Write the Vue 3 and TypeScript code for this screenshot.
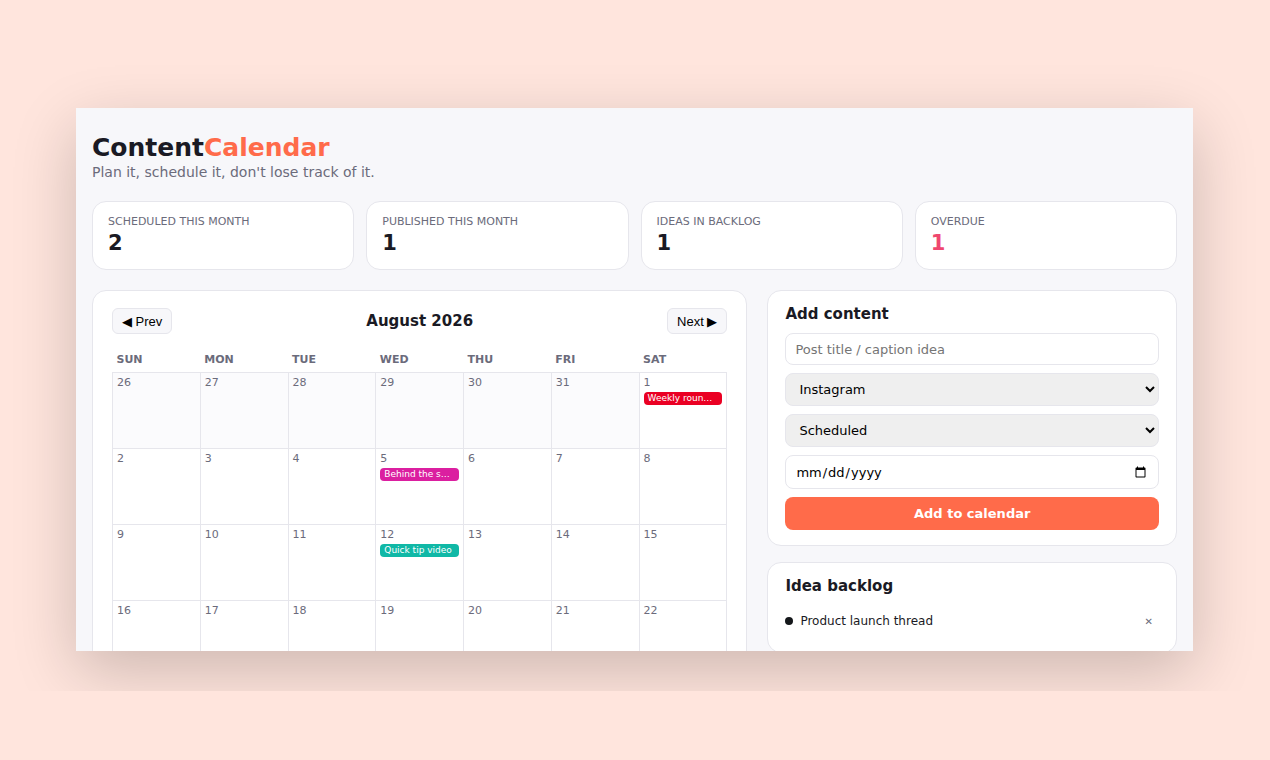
<script setup lang="ts">
import { computed, ref } from 'vue'

type Status = 'Scheduled' | 'Published' | 'Idea'

interface Post {
  id: number
  title: string
  platform: string
  status: Status
  date: string
}

const platforms = ['Instagram', 'TikTok', 'YouTube', 'X']
const statuses: Status[] = ['Scheduled', 'Published', 'Idea']
const weekdays = ['Sun', 'Mon', 'Tue', 'Wed', 'Thu', 'Fri', 'Sat']

const posts = ref<Post[]>([
  { id: 1, title: 'Weekly roundup', platform: 'YouTube', status: 'Published', date: '2026-08-01' },
  { id: 2, title: 'Behind the scenes', platform: 'Instagram', status: 'Scheduled', date: '2026-08-05' },
  { id: 3, title: 'Quick tip video', platform: 'TikTok', status: 'Scheduled', date: '2026-08-12' },
  { id: 4, title: 'Product launch thread', platform: 'X', status: 'Idea', date: '' },
])

const year = ref(2026)
const month = ref(7)
const today = '2026-08-06'

function isoDay(d: Date): string {
  const m = String(d.getMonth() + 1).padStart(2, '0')
  const day = String(d.getDate()).padStart(2, '0')
  return `${d.getFullYear()}-${m}-${day}`
}

const monthTitle = computed(() =>
  new Date(year.value, month.value, 1).toLocaleDateString('en-US', { month: 'long', year: 'numeric' }),
)

const weeks = computed(() => {
  const offset = new Date(year.value, month.value, 1).getDay()
  const length = new Date(year.value, month.value + 1, 0).getDate()
  const rows = Math.ceil((offset + length) / 7)
  return Array.from({ length: rows }, (_, r) =>
    Array.from({ length: 7 }, (_, c) => {
      const d = new Date(year.value, month.value, r * 7 + c - offset + 1)
      const key = isoDay(d)
      return {
        key,
        day: d.getDate(),
        outside: d.getMonth() !== month.value,
        posts: posts.value.filter((p) => p.status !== 'Idea' && p.date === key),
      }
    }),
  )
})

const ideas = computed(() => posts.value.filter((p) => p.status === 'Idea'))

const stats = computed(() => {
  const prefix = isoDay(new Date(year.value, month.value, 1)).slice(0, 7)
  const inMonth = posts.value.filter((p) => p.date.startsWith(prefix))
  return [
    { label: 'Scheduled this month', value: inMonth.filter((p) => p.status === 'Scheduled').length, alert: false },
    { label: 'Published this month', value: inMonth.filter((p) => p.status === 'Published').length, alert: false },
    { label: 'Ideas in backlog', value: ideas.value.length, alert: false },
    { label: 'Overdue', value: posts.value.filter((p) => p.status === 'Scheduled' && p.date < today).length, alert: true },
  ]
})

function shiftMonth(step: number) {
  const d = new Date(year.value, month.value + step, 1)
  year.value = d.getFullYear()
  month.value = d.getMonth()
}

const title = ref('')
const platform = ref('Instagram')
const status = ref<Status>('Scheduled')
const date = ref('')

function addPost() {
  if (!title.value.trim()) return
  posts.value.push({
    id: Date.now(),
    title: title.value.trim(),
    platform: platform.value,
    status: status.value,
    date: date.value,
  })
  title.value = ''
  date.value = ''
}

function removePost(id: number) {
  posts.value = posts.value.filter((p) => p.id !== id)
}
</script>

<template>
  <div class="stage">
    <div class="frame">
      <main class="app">
        <header class="masthead">
          <h1>Content<span>Calendar</span></h1>
          <p>Plan it, schedule it, don't lose track of it.</p>
        </header>

        <section class="stats" aria-label="Summary">
          <div v-for="s in stats" :key="s.label" class="card stat">
            <div class="stat-label">{{ s.label }}</div>
            <div class="stat-value" :class="{ alert: s.alert }">{{ s.value }}</div>
          </div>
        </section>

        <div class="columns">
          <section class="card calendar">
            <div class="calendar-bar">
              <button type="button" class="nav" @click="shiftMonth(-1)">◀ Prev</button>
              <h2>{{ monthTitle }}</h2>
              <button type="button" class="nav" @click="shiftMonth(1)">Next ▶</button>
            </div>
            <table>
              <thead>
                <tr>
                  <th v-for="d in weekdays" :key="d" scope="col">{{ d }}</th>
                </tr>
              </thead>
              <tbody>
                <tr v-for="(week, i) in weeks" :key="i">
                  <td v-for="cell in week" :key="cell.key" :class="{ outside: cell.outside }">
                    <div class="day">{{ cell.day }}</div>
                    <div v-for="p in cell.posts" :key="p.id" class="chip" :class="p.platform.toLowerCase()">
                      {{ p.title }}
                    </div>
                  </td>
                </tr>
              </tbody>
            </table>
          </section>

          <aside class="side">
            <section class="card panel">
              <h2>Add content</h2>
              <form @submit.prevent="addPost">
                <input v-model="title" type="text" placeholder="Post title / caption idea" aria-label="Post title" />
                <select v-model="platform" aria-label="Platform">
                  <option v-for="p in platforms" :key="p">{{ p }}</option>
                </select>
                <select v-model="status" aria-label="Status">
                  <option v-for="s in statuses" :key="s">{{ s }}</option>
                </select>
                <input v-model="date" type="date" aria-label="Date" />
                <button type="submit" class="submit">Add to calendar</button>
              </form>
            </section>

            <section class="card panel">
              <h2>Idea backlog</h2>
              <ul>
                <li v-for="p in ideas" :key="p.id">
                  <span class="dot" :class="p.platform.toLowerCase()"></span>
                  <span class="idea">{{ p.title }}</span>
                  <button type="button" class="remove" :aria-label="`Remove ${p.title}`" @click="removePost(p.id)">✕</button>
                </li>
              </ul>
            </section>
          </aside>
        </div>
      </main>
    </div>
  </div>
</template>

<style>
body {
  margin: 0;
  background: #ffe5dd;
}
</style>

<style scoped>
* {
  box-sizing: border-box;
}

.stage {
  height: 100vh;
  padding-bottom: 69px;
  font-family: 'DejaVu Sans', sans-serif;
  color: #1a1a24;
}

.frame {
  height: 100%;
  padding: 108px 77px 40px 76px;
  overflow: hidden;
}

.app {
  height: 100%;
  padding: 24px 16px 0;
  overflow: hidden;
  background: #f7f7fa;
  box-shadow: 0 20px 60px rgba(0, 0, 0, 0.2);
}

h1,
h2,
p,
ul {
  margin: 0;
  padding: 0;
}

.masthead {
  margin-bottom: 21px;
}

.masthead h1 {
  font-size: 25px;
  line-height: 32px;
}

.masthead h1 span {
  color: #ff6b4a;
}

.masthead p {
  font-size: 14px;
  line-height: 16px;
  color: #6b6b7b;
}

.card {
  background: #fff;
  border: 1px solid #e6e6ec;
  border-radius: 14px;
}

.stats {
  display: grid;
  grid-template-columns: repeat(4, 1fr);
  gap: 12px;
  margin-bottom: 20px;
}

.stat {
  padding: 13px 15px;
}

.stat-label {
  font-size: 11px;
  line-height: 13px;
  text-transform: uppercase;
  color: #6b6b7b;
}

.stat-value {
  margin-top: 2px;
  font-size: 21px;
  font-weight: 700;
  line-height: 26px;
}

.stat-value.alert {
  color: #ef476f;
}

.columns {
  display: grid;
  grid-template-columns: 8fr 5fr;
  align-items: start;
  gap: 20px;
}

.calendar {
  min-width: 0;
  padding: 17px 19px;
}

.calendar-bar {
  display: flex;
  align-items: center;
  justify-content: space-between;
  margin-bottom: 12px;
}

.calendar-bar h2 {
  font-size: 15px;
  line-height: 18px;
}

.nav {
  height: 26px;
  padding: 0 9px;
  border: 1px solid #e6e6ec;
  border-radius: 6px;
  background: #f7f7fa;
  color: #000;
  font: 13px 'Liberation Sans', Arial, sans-serif;
}

table {
  width: 100%;
  table-layout: fixed;
  border-collapse: collapse;
}

th {
  height: 26px;
  padding: 2px 4px 0;
  font-size: 11px;
  text-align: left;
  text-transform: uppercase;
  color: #6b6b7b;
}

td {
  height: 76px;
  padding: 3px 4px;
  border: 1px solid #e6e6ec;
  vertical-align: top;
}

td.outside {
  background: #fbfbfd;
}

.day {
  font-size: 11px;
  line-height: 13px;
  color: #6b6b7b;
}

.chip {
  margin-top: 3px;
  padding: 0 6px 0 4px;
  overflow: hidden;
  border-radius: 4px;
  color: #fff;
  font-size: 9px;
  line-height: 13px;
  text-overflow: ellipsis;
  white-space: nowrap;
}

.youtube {
  background: #ea0023;
}

.instagram {
  background: #db1fa0;
}

.tiktok {
  background: #10b8a6;
}

.x {
  background: #14171a;
}

.side {
  display: grid;
  gap: 16px;
}

.panel {
  padding: 15px 17px;
}

.panel h2 {
  margin-bottom: 10px;
  font-size: 15px;
  line-height: 17px;
}

form {
  display: grid;
  gap: 8px;
}

form input,
form select {
  width: 100%;
  padding: 7px 9px;
  border: 1px solid #e6e6ec;
  border-radius: 8px;
  font-family: inherit;
  font-size: 13px;
  color: #000;
}

form input {
  background: #fff;
}

form input[type='text'] {
  height: 32px;
}

form input[type='date'] {
  height: 34px;
}

form select {
  height: 33px;
  background: #efefef;
}

.submit {
  height: 33px;
  border: 0;
  border-radius: 8px;
  background: #ff6b4a;
  color: #fff;
  font-family: inherit;
  font-size: 13px;
  font-weight: 700;
}

ul {
  list-style: none;
}

li {
  display: flex;
  align-items: center;
  gap: 7px;
  height: 32px;
  font-size: 12px;
}

.dot {
  width: 8px;
  height: 8px;
  border-radius: 50%;
}

.idea {
  flex: 1;
}

.remove {
  padding: 0 6px;
  border: 0;
  background: none;
  color: #6b6b7b;
  font-family: inherit;
  font-size: 10px;
}
</style>
